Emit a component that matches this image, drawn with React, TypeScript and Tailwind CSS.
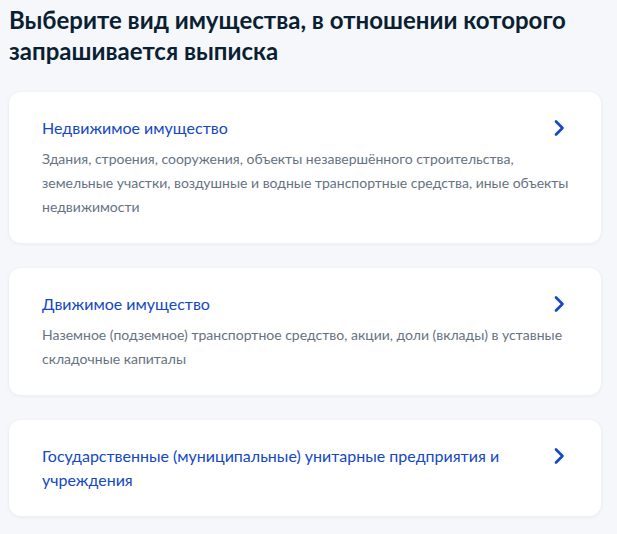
import React from "react";

const items = [
  {
    title: "Недвижимое имущество",
    desc: "Здания, строения, сооружения, объекты незавершённого строительства, земельные участки, воздушные и водные транспортные средства, иные объекты недвижимости",
  },
  {
    title: "Движимое имущество",
    desc: "Наземное (подземное) транспортное средство, акции, доли (вклады) в уставные складочные капиталы",
  },
  {
    title: "Государственные (муниципальные) унитарные предприятия и учреждения",
    desc: "",
  },
];

function Chevron() {
  return (
    <svg width="12" height="18" viewBox="0 0 12 18" fill="none">
      <path d="M3 2.5 L9.5 9 L3 15.5" stroke="#1447c4" strokeWidth="2.6" strokeLinecap="round" strokeLinejoin="round" />
    </svg>
  );
}

export default function App() {
  return (
    <div
      className="min-h-[534px] w-[617px] bg-[#f5f7fb] px-[9px] pt-[4px]"
      style={{ fontFamily: "Lato, 'Noto Sans', sans-serif" }}
    >
      <h1 className="text-[24px] leading-[31px] font-bold text-[#0b1f33]">
        Выберите вид имущества, в отношении которого запрашивается выписка
      </h1>
      <div className="mt-[26px] flex w-[592px] flex-col gap-[25px]">
        {items.map((it) => (
          <div
            key={it.title}
            className="rounded-[12px] bg-white pl-[33px] pr-[24px] py-[24px] shadow-[0_1px_4px_rgba(11,31,51,0.06)]"
          >
            <div className="flex items-start justify-between">
              <div className="w-[470px] text-[16px] leading-[24px] text-[#1447c4]">{it.title}</div>
              <div className="mr-[12px] mt-[3px]">
                <Chevron />
              </div>
            </div>
            {it.desc && (
              <div className="mt-[7px] text-[14px] leading-[24px] text-[#66727f]">{it.desc}</div>
            )}
          </div>
        ))}
      </div>
    </div>
  );
}
